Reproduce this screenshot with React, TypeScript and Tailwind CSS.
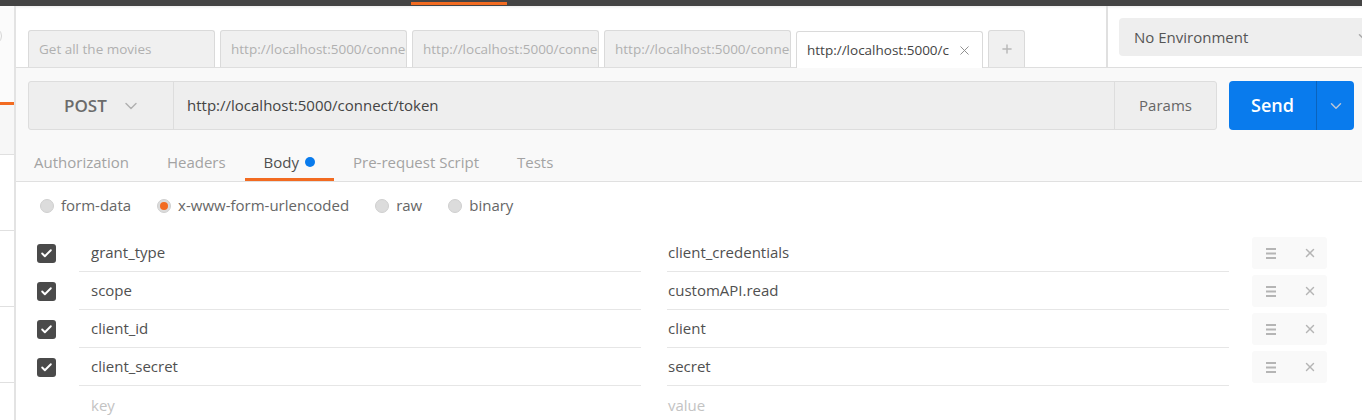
import { Check, ChevronDown, X, Plus } from "lucide-react"

const tabs = [
  { title: "Get all the movies", active: false },
  { title: "http://localhost:5000/connect/token", active: false },
  { title: "http://localhost:5000/connect/token", active: false },
  { title: "http://localhost:5000/connect/token", active: false },
  { title: "http://localhost:5000/connect/token", active: true },
]

const reqTabs = ["Authorization", "Headers", "Body", "Pre-request Script", "Tests"]

const bodyModes = [
  { label: "form-data", checked: false },
  { label: "x-www-form-urlencoded", checked: true },
  { label: "raw", checked: false },
  { label: "binary", checked: false },
]

const params = [
  { key: "grant_type", value: "client_credentials" },
  { key: "scope", value: "customAPI.read" },
  { key: "client_id", value: "client" },
  { key: "client_secret", value: "secret" },
]

function Hamburger() {
  return (
    <svg width="10" height="11" viewBox="0 0 10 11" className="text-[#b5b5b5]">
      <rect x="0" y="0" width="10" height="2" fill="currentColor" />
      <rect x="0" y="4.5" width="10" height="2" fill="currentColor" />
      <rect x="0" y="9" width="10" height="2" fill="currentColor" />
    </svg>
  )
}

export default function App() {
  return (
    <div className="w-[1362px] h-[420px] overflow-hidden bg-white flex flex-col font-['Open_Sans',sans-serif] text-[#505050]">
      {/* top bar */}
      <div className="h-[6px] bg-[#444444] flex shrink-0">
        <div className="ml-[411px] w-[96px] h-[3px] mt-[2px] bg-[#f26b21]" />
      </div>

      <div className="flex flex-1 min-h-0">
        {/* collapsed sidebar */}
        <div className="w-[16px] shrink-0 border-r-2 border-[#e3e3e3] bg-white flex flex-col">
          <div className="h-[96px] bg-[#fbfbfb] pt-[21px]">
            <div className="w-[18px] h-[18px] -ml-[16px] rounded-full border border-[#d6d6d6]" />
          </div>
          <div className="h-[3px] bg-[#f26b21]" />
          <div className="h-[50px] bg-[#f7f7f7] border-b border-[#e0e0e0]" />
          <div className="h-[76px] border-b border-[#e0e0e0]" />
          <div className="h-[76px] border-b border-[#e0e0e0]" />
          <div className="h-[76px] border-b border-[#e0e0e0]" />
        </div>

        {/* main */}
        <div className="flex-1 min-w-0 flex flex-col overflow-hidden">
          {/* request tabs + environment */}
          <div className="h-[62px] shrink-0 flex border-b border-[#dedede] bg-white shadow-[inset_0_3px_3px_-2px_rgba(0,0,0,0.08)]">
            <div className="flex items-end gap-[5px] pl-[12px] w-[1090px] shrink-0">
              {tabs.map((t, i) => (
                <div
                  key={i}
                  className={
                    t.active
                      ? "w-[187px] h-[37px] -mb-px flex items-center pl-[10px] pr-[10px] rounded-t-[3px] border border-b-0 border-[#dadada] bg-white text-[13.5px] text-[#444]"
                      : "w-[187px] h-[37px] flex items-center pl-[10px] rounded-t-[3px] border border-b-0 border-[#dadada] bg-[#f0f0f0] text-[13.5px] text-[#b0b0b0]"
                  }
                >
                  <span className="flex-1 min-w-0 whitespace-nowrap overflow-hidden">{t.title}</span>
                  {t.active && <X size={15} strokeWidth={1.5} className="text-[#8a8a8a] ml-[8px] shrink-0" />}
                </div>
              ))}
              <div className="w-[37px] h-[37px] flex items-center justify-center rounded-t-[3px] border border-b-0 border-[#dadada] bg-[#f0f0f0]">
                <Plus size={14} strokeWidth={2.5} className="text-[#b8b8b8]" />
              </div>
            </div>
            <div className="w-[2px] shrink-0 bg-[#e0e0e0]" />
            <div className="pl-[11px] pt-[12px] shrink-0">
              <div className="h-[38px] w-[262px] rounded-[4px] bg-[#eeeeee] flex items-center pl-[15px] text-[15px] text-[#555] whitespace-nowrap">
                <span className="flex-1">No Environment</span>
                <ChevronDown size={18} className="text-[#aaa] mr-[8px]" />
              </div>
            </div>
          </div>

          {/* url bar + request tabs */}
          <div className="bg-[#f9f9f9] border-b border-[#e0e0e0] shrink-0">
            <div className="flex pl-[12px] pr-[8px] pt-[13px] gap-[12px]">
              <div className="flex flex-1 h-[49px] rounded-[3px] border border-[#dddddd] bg-[#eeeeee]">
                <div className="w-[145px] flex items-center pl-[35px] border-r border-[#dddddd] gap-[14px]">
                  <span className="text-[17px] font-semibold text-[#6b6b6b]">POST</span>
                  <ChevronDown size={20} strokeWidth={1.75} className="text-[#b0b0b0]" />
                </div>
                <div className="flex-1 flex items-center pl-[13px] text-[15px] text-[#444]">
                  http://localhost:5000/connect/token
                </div>
                <div className="w-[102px] flex items-center justify-center border-l border-[#dddddd] text-[15px] text-[#666]">
                  Params
                </div>
              </div>
              <div className="flex h-[49px] w-[125px] rounded-[4px] bg-[#097bed] overflow-hidden">
                <div className="w-[87px] flex items-center justify-center text-[18px] font-semibold text-white">
                  Send
                </div>
                <div className="flex-1 flex items-center justify-center border-l border-[#0a63bd]">
                  <ChevronDown size={18} strokeWidth={2} className="text-[#b8c4d6]" />
                </div>
              </div>
            </div>
            <div className="flex h-[51px] items-end -ml-px">
              {reqTabs.map((t) => (
                <div
                  key={t}
                  className={
                    t === "Body"
                      ? "px-[19px] pt-[3px] h-[38px] flex items-center gap-[6px] border-b-[3px] border-[#f26b21] text-[15px] text-[#505050]"
                      : "px-[19px] pt-[3px] h-[38px] flex items-center border-b-[3px] border-transparent text-[15px] text-[#a3a3a3]"
                  }
                >
                  <span>{t}</span>
                  {t === "Body" && <span className="w-[10px] h-[10px] rounded-full bg-[#097bed]" />}
                </div>
              ))}
            </div>
          </div>

          {/* body mode */}
          <div className="flex items-center h-[47px] pl-[24px] shrink-0 text-[15px] text-[#666]">
            {bodyModes.map((m) => (
              <div key={m.label} className="flex items-center gap-[7px] mr-[26px]">
                <span className="w-[14px] h-[14px] rounded-full bg-[#dcdcdc] border border-[#cfcfcf] flex items-center justify-center">
                  {m.checked && <span className="w-[8px] h-[8px] rounded-full bg-[#f26b21]" />}
                </span>
                <span>{m.label}</span>
              </div>
            ))}
          </div>

          {/* key/value table */}
          <div className="flex flex-col pt-[5px]">
            {params.map((p) => (
              <div key={p.key} className="flex items-center h-[38px]">
                <div className="w-[63px] pl-[21px] shrink-0">
                  <div className="w-[19px] h-[19px] rounded-[3px] bg-[#4a4a4a] flex items-center justify-center">
                    <Check size={13} strokeWidth={3.5} className="text-white" />
                  </div>
                </div>
                <div className="w-[562px] h-full flex items-center pl-[12px] border-b border-[#e6e6e6] text-[15px] text-[#505050]">
                  {p.key}
                </div>
                <div className="w-[26px]" />
                <div className="w-[562px] h-full flex items-center pl-[1px] border-b border-[#e6e6e6] text-[15px] text-[#505050]">
                  {p.value}
                </div>
                <div className="w-[23px]" />
                <div className="w-[75px] h-[32px] rounded-[3px] bg-[#f9f9f9] flex items-center pl-[14px] gap-[27px]">
                  <Hamburger />
                  <X size={14} strokeWidth={2.5} className="text-[#b5b5b5]" />
                </div>
              </div>
            ))}
            <div className="flex items-center h-[38px]">
              <div className="w-[63px] shrink-0" />
              <div className="w-[562px] pl-[12px] text-[15px] text-[#c3c3c3]">key</div>
              <div className="w-[26px]" />
              <div className="w-[562px] pl-[1px] text-[15px] text-[#c3c3c3]">value</div>
            </div>
          </div>
        </div>
      </div>
    </div>
  )
}
